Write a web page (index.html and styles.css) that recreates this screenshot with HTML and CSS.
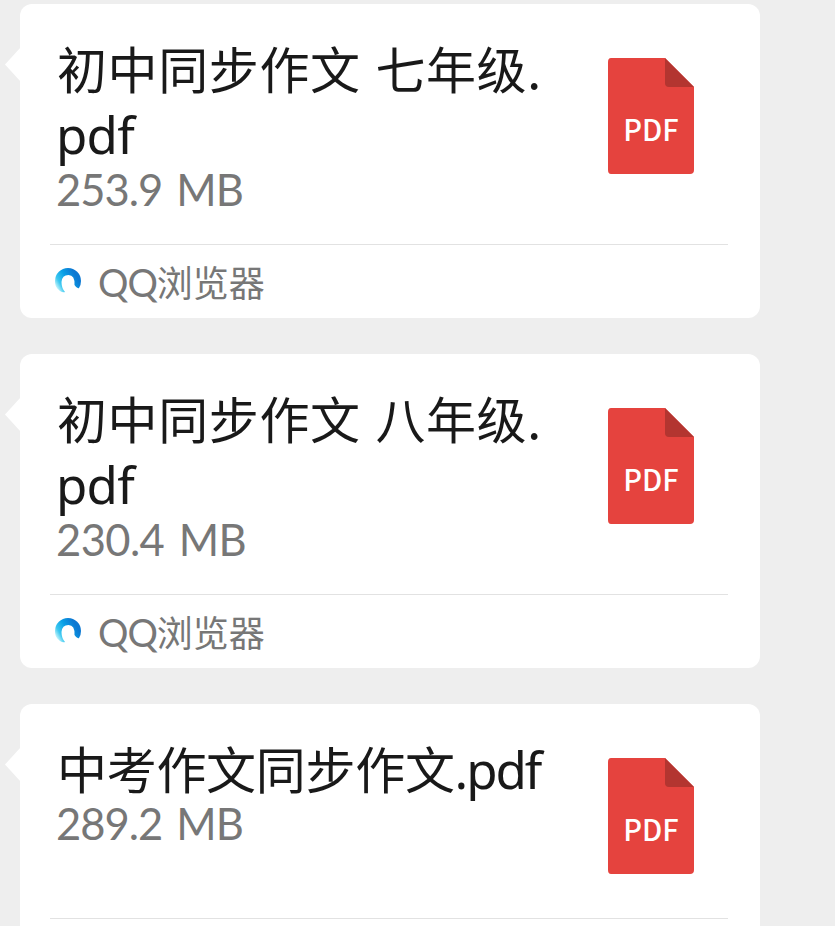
FILE: index.html
```html
<!DOCTYPE html>
<html lang="zh-CN">
<head>
<meta charset="utf-8">
<title>文件</title>
<link rel="stylesheet" href="styles.css">
</head>
<body>
<svg class="defs" width="0" height="0">
  <defs>
    <linearGradient id="ring" gradientUnits="userSpaceOnUse" x1="5" y1="26" x2="25" y2="14">
      <stop offset="0" stop-color="#d8fbfd"/>
      <stop offset="0.25" stop-color="#3cc8f0"/>
      <stop offset="0.6" stop-color="#0aa0e6"/>
      <stop offset="1" stop-color="#0b78d2"/>
    </linearGradient>
    <symbol id="doc" viewBox="0 0 88 116">
      <path fill="#e5433e" d="M4 0H58L87 29V112Q87 116 83 116H4Q1 116 1 112V4Q1 0 4 0Z"/>
      <path fill="#b33530" d="M58 0L87 29H62Q58 29 58 25Z"/>
    </symbol>
    <symbol id="qq" viewBox="0 0 28 28">
      <path fill="url(#ring)" d="M6 24C2 21 1 18 1 14A13 13 0 0 1 27 14Q27 18 25 21Q23 22 20.500 18Q21 8 14.500 8Q8 8 7.500 15Q7.500 21 11 25Q9 26 6 24Z"/>
    </symbol>
  </defs>
</svg>
<main class="chat">
  <article class="card">
    <div class="body">
      <div class="info">
        <h2 class="title"><span class="line spaced">初中同步作文 七年级.</span><span class="line latin">pdf</span></h2>
        <p class="size">253.9 MB</p>
      </div>
      <div class="file"><svg><use href="#doc"/></svg><span class="label">PDF</span></div>
    </div>
    <footer class="source"><svg><use href="#qq"/></svg><span><span class="qq">QQ</span>浏览器</span></footer>
  </article>
  <article class="card">
    <div class="body">
      <div class="info">
        <h2 class="title"><span class="line spaced">初中同步作文 八年级.</span><span class="line latin">pdf</span></h2>
        <p class="size wide">230.4 MB</p>
      </div>
      <div class="file"><svg><use href="#doc"/></svg><span class="label">PDF</span></div>
    </div>
    <footer class="source"><svg><use href="#qq"/></svg><span><span class="qq">QQ</span>浏览器</span></footer>
  </article>
  <article class="card last">
    <div class="body short">
      <div class="info">
        <h2 class="title"><span class="line dense">中考作文同步作文<span class="latin tight">.pdf</span></span></h2>
        <p class="size">289.2 MB</p>
      </div>
      <div class="file"><svg><use href="#doc"/></svg><span class="label">PDF</span></div>
    </div>
  </article>
</main>
</body>
</html>
```

FILE: styles.css
```css
* { box-sizing: border-box; }
body {
  margin: 0;
  height: 926px;
  overflow: hidden;
  background: #eee;
  font-family: "Noto Sans CJK SC", sans-serif;
}
.defs { position: absolute; }
.chat {
  display: flex;
  flex-direction: column;
  gap: 36px;
  padding: 4px 75px 0 20px;
}
.card {
  position: relative;
  height: 314px;
  flex: none;
  padding: 0 32px 0 30px;
  border-radius: 12px;
  background: #fff;
}
.card.last { height: 222px; border-radius: 12px 12px 0 0; }
.card::before {
  content: "";
  position: absolute;
  left: -15px;
  top: 43px;
  width: 16px;
  height: 35px;
  background: #fff;
  clip-path: polygon(100% 0, 0 50%, 100% 100%);
}
.body {
  display: flex;
  justify-content: space-between;
  height: 241px;
  padding: 30px 33px 0 7px;
  border-bottom: 1px solid #e2e2e2;
}
.body.short { height: 215px; }
.title {
  margin: 0;
  font-size: 50px;
  line-height: 66px;
  font-weight: 400;
  color: #191919;
}
.line { display: block; height: 66px; white-space: nowrap; }
.line.latin { position: relative; top: 1px; }
.spaced { letter-spacing: 0.6px; word-spacing: 3px; }
.dense { letter-spacing: -0.3px; }
.latin { font-family: "Noto Sans", sans-serif; font-size: 51px; line-height: 66px; }
.line.latin { letter-spacing: -0.8px; margin-left: -1px; }
.tight { letter-spacing: -2.1px; }
.size {
  margin: 0 0 0 -1px;
  font-family: Lato, sans-serif;
  font-size: 43.5px;
  font-kerning: none;
  line-height: 47px;
  letter-spacing: -1px;
  word-spacing: 4px;
  white-space: nowrap;
  color: #777;
}
.size.wide { letter-spacing: -0.6px; }
.file {
  position: relative;
  width: 88px;
  height: 116px;
  margin-top: 24px;
}
.file svg { display: block; width: 88px; height: 116px; }
.label {
  position: absolute;
  left: 0;
  top: 50px;
  width: 88px;
  text-align: center;
  font-size: 29px;
  line-height: 40px;
  font-weight: 500;
  color: #fff;
}
.source {
  display: flex;
  align-items: center;
  gap: 16px;
  height: 73px;
  padding-left: 4px;
  font-size: 36px;
  line-height: 50px;
  color: #777;
}
.source svg { width: 28px; height: 28px; margin-top: -2px; }
.qq { font-family: Lato, sans-serif; font-size: 38px; letter-spacing: -1px; }
```
